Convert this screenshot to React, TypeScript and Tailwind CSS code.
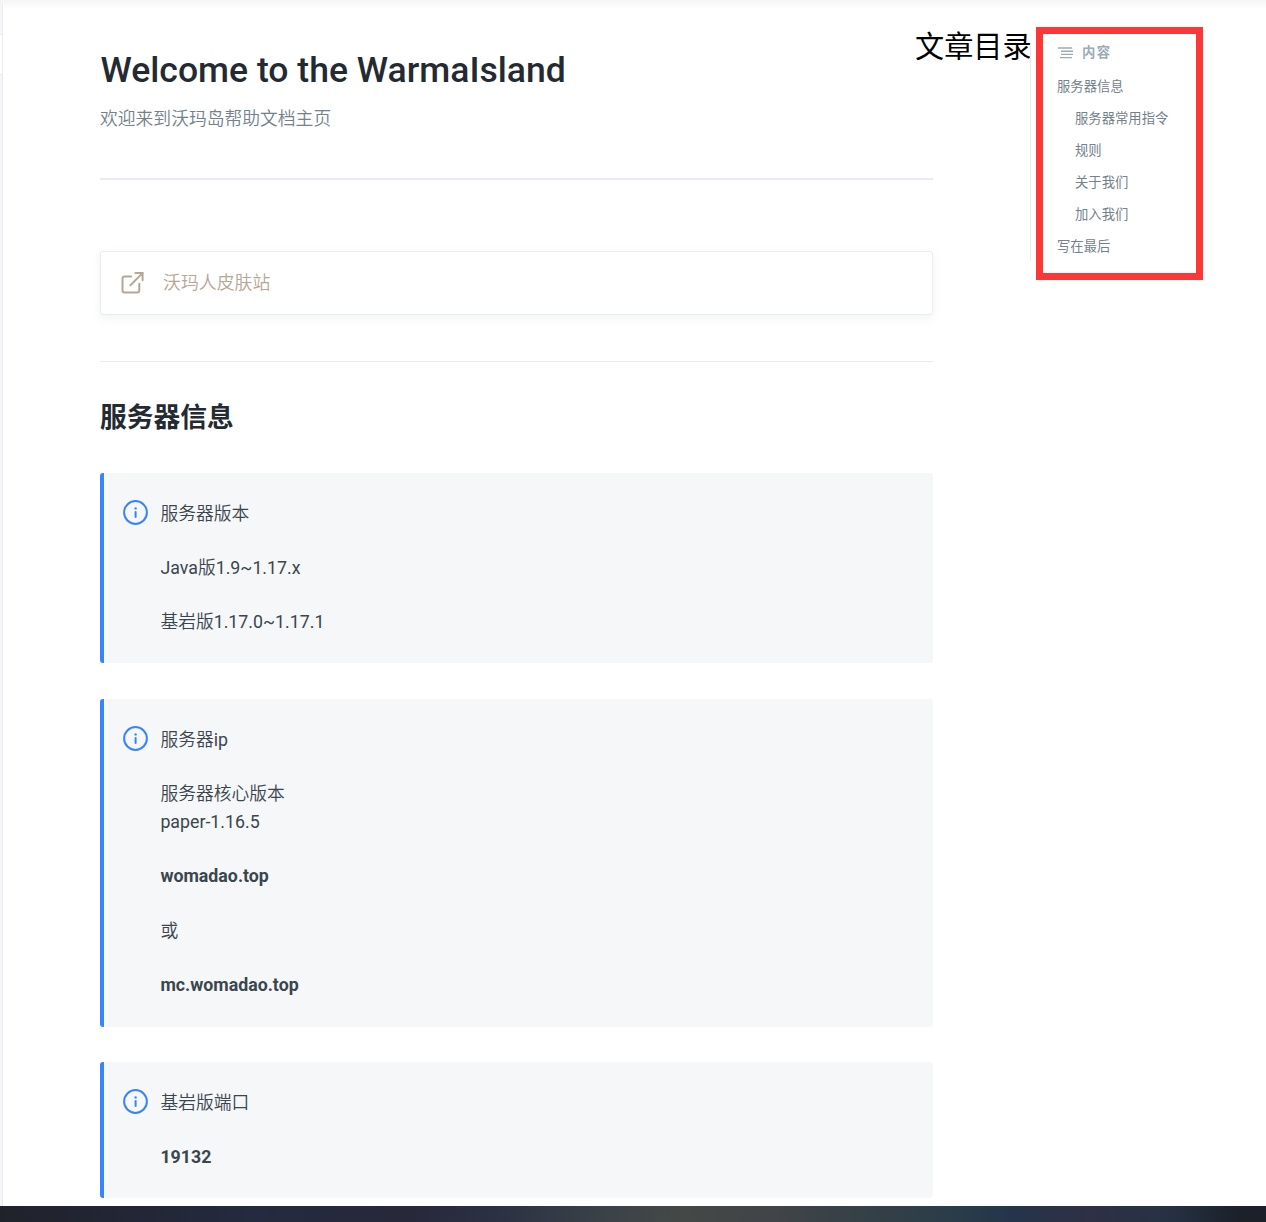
import type { ReactNode } from "react";

const toc = [
  { label: "服务器信息", nested: false },
  { label: "服务器常用指令", nested: true },
  { label: "规则", nested: true },
  { label: "关于我们", nested: true },
  { label: "加入我们", nested: true },
  { label: "写在最后", nested: false },
];

function InfoIcon() {
  return (
    <svg viewBox="0 0 27 27" className="block h-[27px] w-[27px] shrink-0" fill="none" stroke="#3884ff">
      <circle cx="13.5" cy="13.5" r="11.4" strokeWidth="2" />
      <path d="M13.6 13v5" strokeWidth="2" strokeLinecap="round" />
      <circle cx="13.6" cy="9.4" r="1.2" fill="#3884ff" stroke="none" />
    </svg>
  );
}

function ExternalLinkIcon() {
  return (
    <svg
      viewBox="0 0 27 27"
      className="block h-[27px] w-[27px] shrink-0"
      fill="none"
      stroke="#b9a595"
      strokeWidth="2"
      strokeLinecap="round"
      strokeLinejoin="round"
    >
      <path d="M12.2 6.4H5.7a2.2 2.2 0 0 0-2.2 2.2v11.7a2.2 2.2 0 0 0 2.2 2.2h12.4a2.2 2.2 0 0 0 2.2-2.2v-6.5" />
      <path d="M16.4 3.1h7.2v7.2M23.3 3.4 11.4 15.2" strokeLinejoin="miter" />
    </svg>
  );
}

function Hint({ children, className }: { children: ReactNode; className: string }) {
  return (
    <div className={`flex rounded-[3px] border-l-4 border-[#3884ff] bg-[#f5f7f9] pl-[18px] pt-[26px] ${className}`}>
      <InfoIcon />
      <div className="ml-[11.4px] flex flex-col gap-[26.67px] pt-[1.6px] text-[17.78px] leading-[27.78px] text-[#3b454e]">
        {children}
      </div>
    </div>
  );
}

export default function App() {
  return (
    <div className="flex h-[1222px] w-[1266px] flex-col overflow-hidden bg-white font-['Roboto','Noto_Sans_CJK_SC',sans-serif]">
      <div className="relative flex h-[1206px] shrink-0">
        <div className="pointer-events-none absolute inset-x-0 top-0 h-[9px] bg-linear-to-b from-[#f5f5f5] to-white/0" />
        <aside className="flex w-[3px] shrink-0 flex-col border-r border-[#e6ecf1] bg-[#f5f7f9]">
          <div className="mt-[34px] h-[41px] border-y border-[#e6ecf1] bg-white" />
        </aside>

        <main className="ml-[97px] w-[833px] shrink-0">
          <h1 className="pl-[0.5px] pt-[44px] text-[35.55px] font-medium leading-[53px] text-[#242a31]">
            Welcome to the WarmaIsland
          </h1>
          <p className="mt-[8px] text-[17.8px] font-[350] leading-[28px] text-[#74818d]">欢迎来到沃玛岛帮助文档主页</p>
          <hr className="mt-[45px] border-t-2 border-[#e6ecf1]" />

          <a className="mt-[71px] flex h-[64px] items-center rounded-[3px] border border-[#e6ecf1] pl-[18px] shadow-[0_3px_8px_rgba(116,129,141,0.1)]">
            <ExternalLinkIcon />
            <span className="ml-[17px] text-[17.9px] font-[350] text-[#b9a595]">沃玛人皮肤站</span>
          </a>
          <hr className="mt-[46px] border-[#e6ecf1]" />

          <h2 className="mt-[36px] text-[26.75px] font-bold leading-[40px] text-[#242a31]">服务器信息</h2>

          <Hint className="mt-[35px] h-[190px]">
            <p className="font-[350]">服务器版本</p>
            <p>Java<span className="font-[350]">版</span>1.9~1.17.x</p>
            <p><span className="font-[350]">基岩版</span>1.17.0~1.17.1</p>
          </Hint>
          <Hint className="mt-[36px] h-[328px]">
            <p><span className="font-[350]">服务器</span>ip</p>
            <p><span className="font-[350]">服务器核心版本</span><br />paper-1.16.5</p>
            <p className="font-bold">womadao.top</p>
            <p className="font-[350]">或</p>
            <p className="font-bold">mc.womadao.top</p>
          </Hint>
          <Hint className="mt-[35px] h-[136px]">
            <p className="font-[350]">基岩版端口</p>
            <p className="font-bold">19132</p>
          </Hint>
        </main>

        <section className="flex">
          <div className="-ml-[18px] mt-[26px] w-[115px] shrink-0 whitespace-nowrap text-[29.2px] leading-[42px] text-black">
            文章目录
          </div>
          <div className="mt-[44px] h-[217px] w-px shrink-0 bg-[#e6ecf1]" />
          <nav className="ml-[5px] mt-[27px] h-[253px] w-[167px] border-[7px] border-[#fc3737] pl-[14px] pt-[11px] text-[13.33px] text-[#74818d]">
            <div className="flex h-[16px] items-center">
              <svg viewBox="0 0 16 12" className="block h-[12px] w-[16px]" stroke="#9daab6" strokeWidth="1.4">
                <path d="M1 1h14M4 4.2h12M4 7.4h12M3 10.6h12" />
              </svg>
              <span className="ml-[9px] font-bold leading-[16px] tracking-[1.33px] text-[#9daab6]">内容</span>
            </div>
            <ul className="mt-[10px]">
              {toc.map((item) => (
                <li key={item.label} className={item.nested ? "h-8 pl-[18px] leading-8" : "h-8 leading-8"}>
                  {item.label}
                </li>
              ))}
            </ul>
          </nav>
        </section>
      </div>
      <footer className="h-4 shrink-0 bg-[linear-gradient(90deg,#20222b_0%,#242a3f_20%,#27283a_32%,#2b3043_39%,#3b4248_48%,#444846_54%,#414448_61%,#354047_68%,#2b3d49_75%,#25344b_80%,#2e3045_86%,#263244_92%,#1b2029_98%)]" />
    </div>
  );
}
